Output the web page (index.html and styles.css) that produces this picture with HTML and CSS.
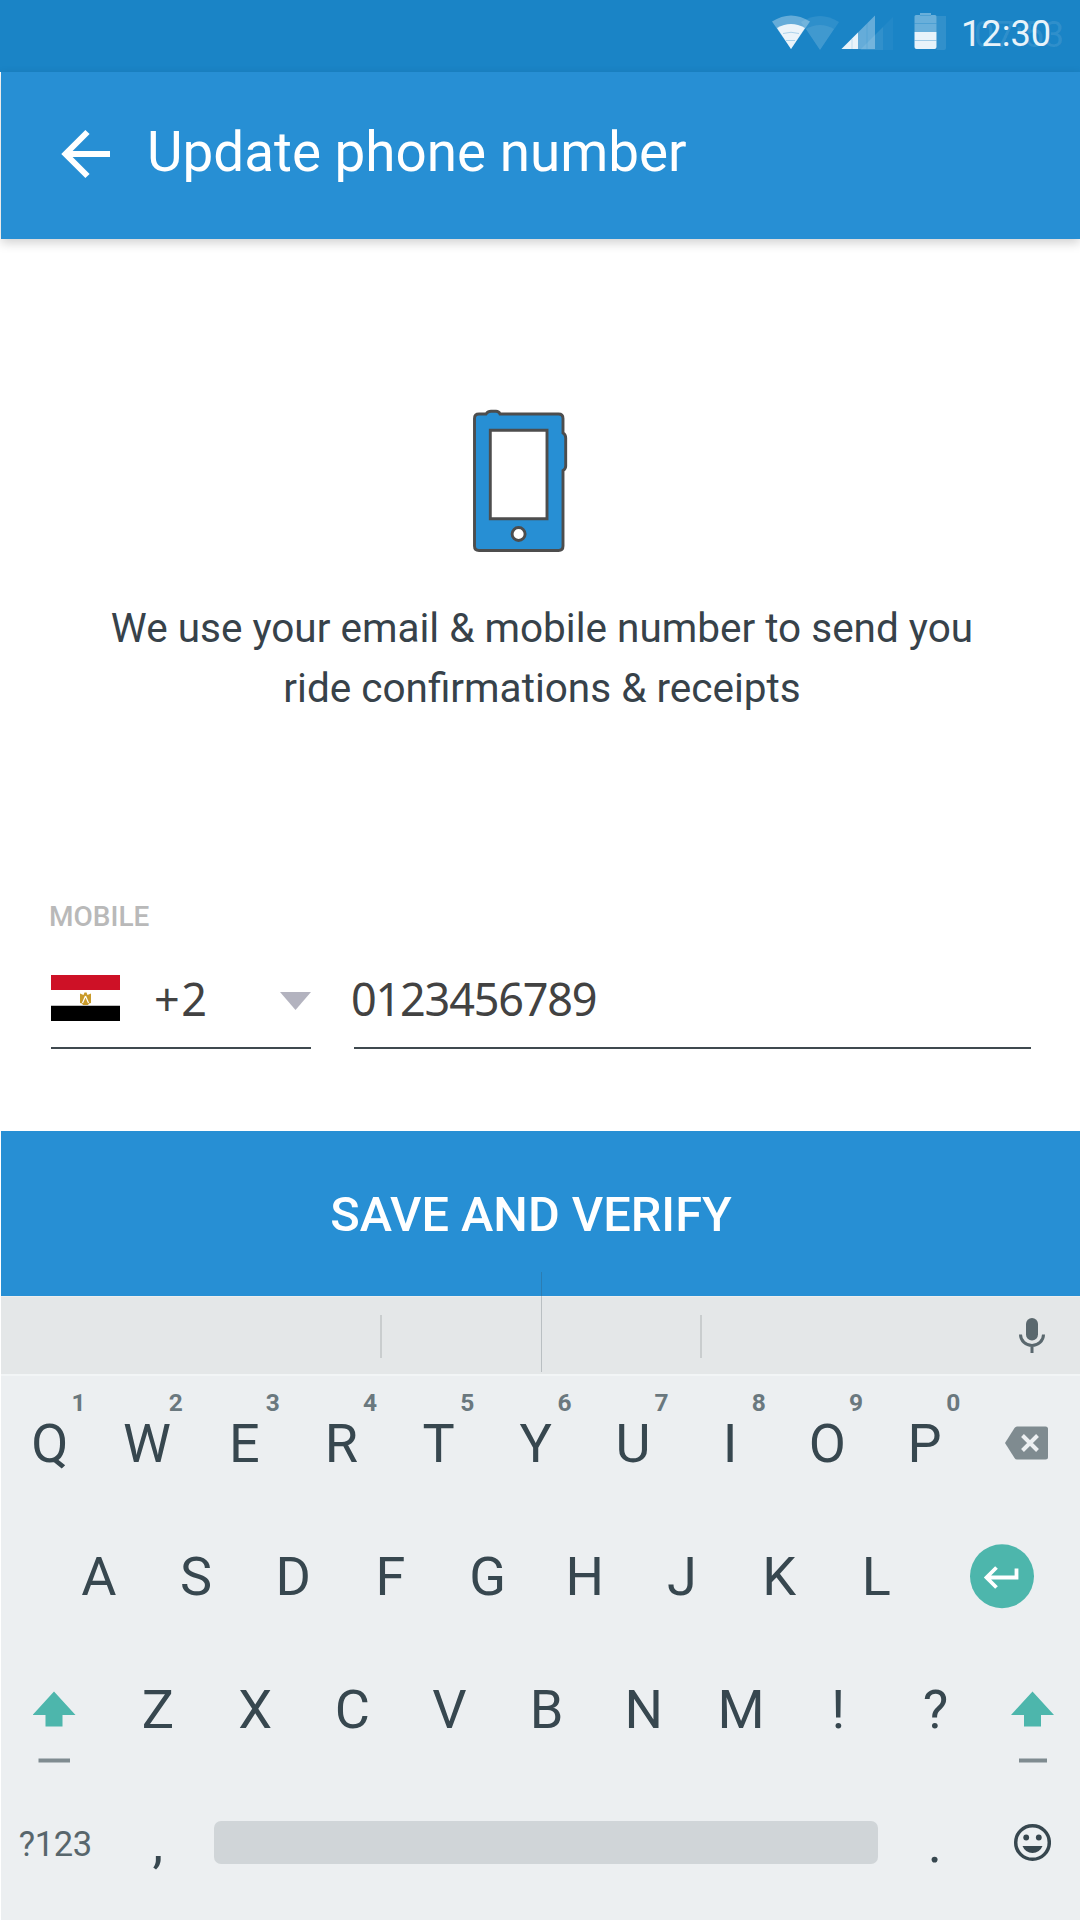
FILE: index.html
```html
<!DOCTYPE html>
<html lang="en">
<head>
<meta charset="utf-8">
<title>Update phone number</title>
<link rel="stylesheet" href="styles.css">
</head>
<body>
<div class="screen">
  <div class="status-bar">
    <svg class="status-icons" width="200" height="72" viewBox="760 0 200 72" fill="#fff">
      <path opacity=".09" d="M801 22Q820 10 839 22L820 50Z"/>
      <path opacity=".09" d="M806 29Q820 21 834 29L820 50Z"/>
      <path opacity=".33" d="M772 21.500Q791 9.500 810 21.500L791 49Z"/>
      <path opacity=".87" d="M777 28Q791 20 805 28L791 49Z"/>
      <path d="M783 33.500Q791 31 799 33.500M786 40.500H795" fill="none" stroke="#1a84c6" stroke-opacity=".3"/>
      <path opacity=".1" d="M860 50L883 27V50Z"/>
      <path opacity=".04" d="M883 50V27L893 17V50Z"/>
      <path opacity=".33" d="M841.500 49L875 15.500V49Z"/>
      <path opacity=".85" d="M841.500 49L858 32.500V49Z"/>
      <path d="M867 23V49M852 39V49" stroke="#1a84c6" stroke-opacity=".2"/>
      <path opacity=".1" d="M936.500 16H946V48q0 2-2 2h-7.500z"/>
      <path opacity=".35" d="M920 13h11v2h4q1.500 0 1.500 1.500V32h-22V16.500q0-1.500 1.500-1.500h4z"/>
      <path opacity=".9" d="M914.500 32h22v15q0 2-2 2h-18q-2 0-2-2z"/>
      <path d="M914.500 23.500h22M914.500 40.500h22M920 15.500h11" stroke="#1a84c6" stroke-opacity=".35"/>
    </svg>
    <div class="clock">12:30<span class="clock-ghost">07:53</span></div>
  </div>
  <header class="app-bar">
    <svg class="back" width="50" height="50" viewBox="0 0 50 50" fill="none" stroke="#fff" stroke-width="6"><path d="M26.500 3L4.500 25L26.500 47M4 25H49"/></svg>
    <h1 class="title">Update phone number</h1>
  </header>
  <main class="content">
    <svg class="phone" width="98" height="146" viewBox="471 408 98 146" stroke="#4d4d4d" stroke-width="2.900">
      <path fill="#278fd4" d="M479 414H486Q488 411.300 491 411.300H496Q499 411.300 500 414H558.500Q563 414 563 418.500V433Q565.700 434.500 565.700 438V466Q565.700 469 563 470.500V546Q563 550.500 558.500 550.500H479Q474.500 550.500 474.500 546V418.500Q474.500 414 479 414Z"/>
      <path fill="#fff" d="M490.300 430.300H547V518.700H490.300Z"/>
      <circle fill="#fff" cx="518.600" cy="534" r="6.500"/>
    </svg>
    <p class="description">We use your email &amp; mobile number to send you<br>ride confirmations &amp; receipts</p>
    <div class="form">
      <div class="label">MOBILE</div>
      <div class="fields">
        <div class="field country">
          <svg width="69" height="46" viewBox="0 0 69 46"><path fill="#fff" d="M0 0h69v46H0z"/><path fill="#ce1126" d="M0 0h69v15H0z"/><path fill="#000" d="M0 30.700h69V46H0z"/><path fill="#c99b2b" d="M29 18.500l3.500 1.500 1-2.500h2l1 2.500 3.500-1.500v9.500l-2 .5-1 1.500h-5l-1-1.500-2-.5z"/><path d="M34.500 21l-3 7M34.500 21l3 7" stroke="#fff" stroke-width="1.200" fill="none"/></svg>
          <span class="code">+2</span>
          <svg class="caret" width="31" height="18" viewBox="0 0 31 18"><path fill="#b3b3bf" d="M0 0H31L15.500 18Z"/></svg>
        </div>
        <div class="field number"><span class="digits">0123456789</span></div>
      </div>
    </div>
  </main>
  <div class="save"><span class="save-text">SAVE AND VERIFY</span></div>
  <div class="suggestions">
    <div class="divider"></div>
    <div class="divider"></div>
    <svg class="mic" width="26" height="36" viewBox="0 0 26 36"><rect x="7" y="0" width="12" height="22.500" rx="6" fill="#5a686e"/><path d="M1.500 16.500C1.500 23 7 27.500 13 27.500S24.500 23 24.500 16.500M13 27.500V35" fill="none" stroke="#5a686e" stroke-width="3"/></svg>
    <div class="center-line"></div>
  </div>
  <div class="keyboard">
    <div class="row">
      <div class="key">Q<sup class="hint">1</sup></div><div class="key">W<sup class="hint">2</sup></div><div class="key">E<sup class="hint">3</sup></div><div class="key">R<sup class="hint">4</sup></div><div class="key">T<sup class="hint">5</sup></div><div class="key">Y<sup class="hint">6</sup></div><div class="key">U<sup class="hint">7</sup></div><div class="key">I<sup class="hint">8</sup></div><div class="key">O<sup class="hint">9</sup></div><div class="key">P<sup class="hint">0</sup></div>
      <div class="key wide"><svg width="43" height="35" viewBox="0 0 43 35"><path fill="#7f8b90" d="M12 0.500H40.500Q43 0.500 43 3V31Q43 33.500 40.500 33.500H12Q10.500 33.500 9.500 32L0 17L9.500 2Q10.500 .5 12 .5Z"/><path stroke="#eceff1" stroke-width="4" d="M17.500 9.500L32.500 24.500M32.500 9.500L17.500 24.500"/></svg></div>
    </div>
    <div class="row second">
      <div class="key">A</div><div class="key">S</div><div class="key">D</div><div class="key">F</div><div class="key">G</div><div class="key">H</div><div class="key">J</div><div class="key">K</div><div class="key">L</div>
      <div class="key wide"><svg width="64" height="65" viewBox="0 0 64 65"><circle cx="32" cy="32.200" r="32" fill="#4db6ac"/><path d="M46.500 24.500V33.500H17M26.500 23.500L16.500 33.500L26.500 43.500" fill="none" stroke="#fff" stroke-width="3.800"/></svg></div>
    </div>
    <div class="row">
      <div class="key edge"><svg width="44" height="106" viewBox="0 0 44 106"><path fill="#4db6ac" d="M21 34.500L42.500 58H29.500V69.500H12.500V58H-.5Z"/><path fill="#7f8b90" d="M5.500 101.500H37V105.500H5.500Z"/></svg></div>
      <div class="key">Z</div><div class="key">X</div><div class="key">C</div><div class="key">V</div><div class="key">B</div><div class="key">N</div><div class="key">M</div><div class="key">!</div><div class="key">?</div>
      <div class="key wide"><svg width="44" height="106" viewBox="0 0 44 106"><path fill="#4db6ac" d="M22.500 34.500L44 58H31V69.500H14V58H1Z"/><path fill="#7f8b90" d="M9 101.500H37V105.500H9Z"/></svg></div>
    </div>
    <div class="row">
      <div class="key edge symbols">?123</div>
      <div class="key">,</div>
      <div class="space"></div>
      <div class="key">.</div>
      <div class="key wide"><svg width="38" height="41" viewBox="0 0 38 41"><g transform="translate(19.500 19.500)"><circle r="16.800" fill="none" stroke="#37474f" stroke-width="3.500"/><circle cx="-6.300" cy="-5" r="2.900" fill="#37474f"/><circle cx="6.300" cy="-5" r="2.900" fill="#37474f"/><path fill="#37474f" d="M-10 3.500H10Q7 10.500 0 10.500T-10 3.500Z"/></g></svg></div>
    </div>
  </div>
</div>
</body>
</html>
```
FILE: styles.css
```css
* { box-sizing: border-box; margin: 0; }
body { width: 1080px; height: 1920px; background: #fff; font-family: Roboto, sans-serif; overflow: hidden; }
svg { display: block; flex: none; }
.screen { display: flex; flex-direction: column; height: 1920px; }
.status-bar { height: 72px; background: #1a84c6; display: flex; justify-content: flex-end; align-items: center; padding-right: 28px; }
.clock { position: relative; width: 92px; padding-left: 1px; font-size: 36.2px; line-height: 42px; color: #e8f3fa; margin-top: -4px; white-space: nowrap; }
.clock-ghost { position: absolute; left: 14px; top: 1px; color: rgba(255, 255, 255, .1); }
.app-bar { height: 167px; flex: none; margin-left: 1px; background: #278fd4; box-shadow: 0 4px 10px rgba(0, 0, 0, .18); display: flex; align-items: center; padding: 0 0 7px 60px; position: relative; }
.back { margin-top: 3px; }
.title { margin-left: 36px; font-size: 54.8px; font-weight: 400; line-height: 64px; color: #fff; white-space: nowrap; margin-top: -1px; }
.content { height: 892px; flex: none; display: flex; flex-direction: column; align-items: center; padding-top: 169px; }
.phone { margin-right: 40px; }
.description { margin-top: 44px; margin-left: 4px; text-align: center; font-size: 40.5px; line-height: 60px; color: #37424a; white-space: nowrap; }
.form { width: 982px; margin-top: 183px; }
.label { font-size: 28px; font-weight: 500; line-height: 32px; color: #b9b9b9; }
.fields { display: flex; gap: 43px; margin-top: 33px; padding-left: 2px; }
.field { height: 83px; border-bottom: 2px solid #3f494f; display: flex; align-items: center; padding-bottom: 17px; font-family: "Noto Sans", sans-serif; font-size: 45px; line-height: 60px; color: #424242; }
.country { width: 260px; }
.code { margin-left: 34px; margin-top: 1px; letter-spacing: 1.5px; }
.caret { margin-left: auto; margin-top: 5px; }
.number { flex: 1; }
.digits { margin-left: -3px; margin-top: 1px; letter-spacing: -1.2px; }
.save { height: 165px; flex: none; margin-left: 1px; background: #278fd4; display: flex; align-items: center; justify-content: center; }
.save-text { font-size: 48.7px; font-weight: 500; line-height: 56px; color: #fff; margin: 3px 19px 0 0; }
.suggestions { height: 80px; flex: none; margin-left: 1px; background: #e4e7e8; border-top: 1px solid #eceeee; border-bottom: 2px solid #f2f5f6; display: flex; align-items: center; padding-left: 379px; position: relative; }
.divider { width: 2px; height: 43px; background: #c9cdce; margin-right: 317.5px; margin-top: 1px; }
.mic { margin-top: 1px; }
.center-line { position: absolute; left: 540px; top: -25px; width: 1px; height: 100px; background: rgba(55, 71, 79, .25); }
.keyboard { flex: 1; margin-left: 1px; background: #eceff1; padding: 1px 0 0 .3px; color: #37474f; }
.row { display: flex; height: 133.3px; align-items: center; }
.second { padding-left: 49px; }
.key { position: relative; flex: none; width: 97.2px; height: 100%; display: flex; align-items: center; justify-content: center; font-size: 54px; line-height: 64px; }
.hint { position: absolute; left: 70.2px; top: 12px; font-size: 24.5px; font-weight: 700; line-height: 28px; color: #6a787e; }
.edge { width: 108px; }
.wide { width: auto; flex: 1; }
.symbols { font-size: 34.5px; color: #58666c; letter-spacing: -.3px; }
.space { width: 664px; height: 43px; margin: -3px 8px 0 7.7px; border-radius: 7px; background: #d0d5d8; }
```
